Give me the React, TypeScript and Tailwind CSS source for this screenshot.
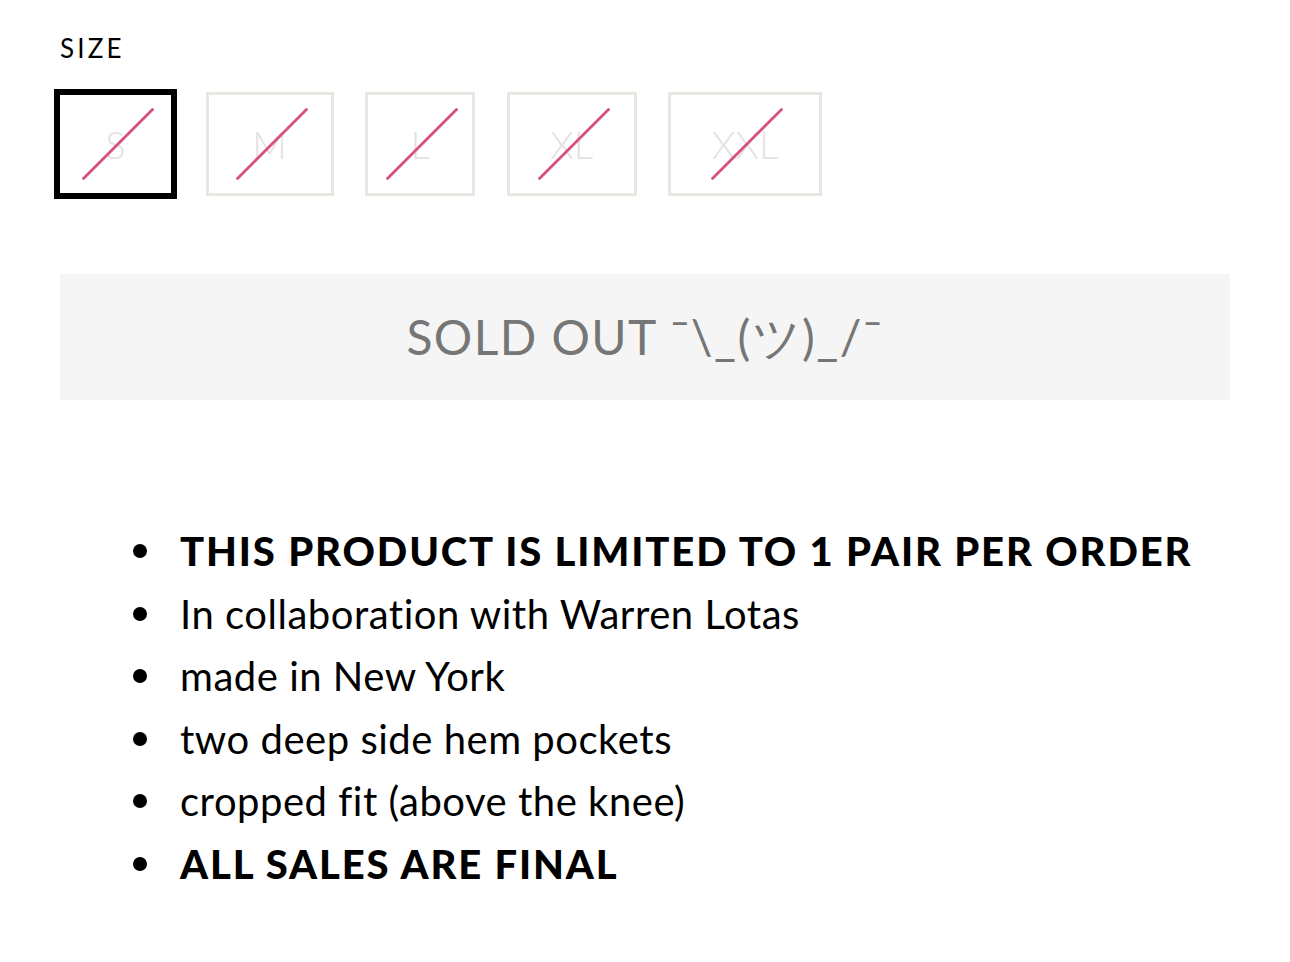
const sizes = [
  { label: "S", w: "w-[117px]", active: true },
  { label: "M", w: "w-[128px]" },
  { label: "L", w: "w-[110px]" },
  { label: "XL", w: "w-[130px]" },
  { label: "XXL", w: "w-[154px]" },
]

const details = [
  { text: "THIS PRODUCT IS LIMITED TO 1 PAIR PER ORDER", bold: true },
  { text: "In collaboration with Warren Lotas" },
  { text: "made in New York" },
  { text: "two deep side hem pockets" },
  { text: "cropped fit (above the knee)" },
  { text: "ALL SALES ARE FINAL", bold: true },
]

function SizeButton({ label, w, active }: { label: string; w: string; active?: boolean }) {
  return (
    <button
      type="button"
      disabled
      className={[
        "relative flex h-[104px] items-center justify-center bg-white",
        w,
        active
          ? "border-[3px] border-black outline-[3px] outline-solid outline-black"
          : "border-[3px] border-[#e8e6e1]",
      ].join(" ")}
    >
      <span className="text-[38px] font-light text-[#e4e2de]">{label}</span>
      <svg
        className="absolute left-1/2 top-1/2 ml-[2px] h-[72px] w-[72px] -translate-x-1/2 -translate-y-1/2"
        viewBox="0 0 72 72"
      >
        <line x1="1.5" y1="70.5" x2="70.5" y2="1.5" stroke="#d6527c" strokeWidth="2.8" strokeLinecap="round" />
      </svg>
    </button>
  )
}

export default function App() {
  return (
    <div className="min-h-[962px] bg-white px-[60px] pt-[35px] font-['Lato','Liberation_Sans',sans-serif] text-black">
      <div className="text-[26px] leading-none tracking-[0.12em]">SIZE</div>

      <div className="-ml-[3px] mt-[31px] flex gap-[31.5px]">
        {sizes.map((s) => (
          <SizeButton key={s.label} {...s} />
        ))}
      </div>

      <div className="mt-[78px] flex h-[126px] items-center justify-center bg-[#f5f5f5] text-[48px] tracking-[0.03em] text-[#767676]">
        SOLD OUT ¯\_(ツ)_/¯
      </div>

      <ul className="mt-[120px] pl-[73px]">
        {details.map((d) => (
          <li key={d.text} className="flex h-[62.5px] items-center">
            <span className="mr-[33px] h-[14px] w-[14px] shrink-0 rounded-full bg-black" />
            <span
              className={
                d.bold
                  ? "text-[40px] font-black tracking-[0.047em]"
                  : "text-[40px] tracking-[0.013em]"
              }
            >
              {d.text}
            </span>
          </li>
        ))}
      </ul>
    </div>
  )
}
